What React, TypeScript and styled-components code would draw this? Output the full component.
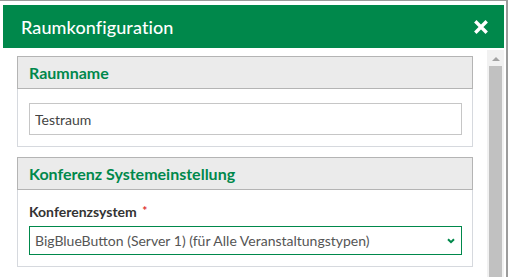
import styled, { createGlobalStyle } from 'styled-components';

const GlobalStyle = createGlobalStyle`
  html, body {
    margin: 0;
    padding: 0;
    overflow: hidden;
    background-color: #9c9c9c;
    font-family: Lato, 'Open Sans', sans-serif;
  }
`;

const green = '#00884b';

const CloseIcon = () => (
  <svg width='14' height='14' viewBox='0 0 14 14'>
    <path
      d='M2.5 2.5 L11.5 11.5 M11.5 2.5 L2.5 11.5'
      stroke='#fff'
      strokeWidth='3.4'
      strokeLinecap='square'
    />
  </svg>
);

const Chevron = () => (
  <svg width='8' height='6' viewBox='0 0 8 6'>
    <path d='M1 1.2 L4 4.2 L7 1.2' stroke={green} strokeWidth='2' fill='none' />
  </svg>
);

type PanelProps = {
  title?: string;
  children?: React.ReactNode;
};

const Panel = ({ title, children }: PanelProps): JSX.Element => {
  return (
    <PanelBox>
      <PanelHeader>{title}</PanelHeader>
      {children && <PanelBody>{children}</PanelBody>}
    </PanelBox>
  );
};

const App = (): JSX.Element => {
  return (
    <>
      <GlobalStyle />
      <Modal>
        <Header>
          <Title>Raumkonfiguration</Title>
          <CloseButton>
            <CloseIcon />
          </CloseButton>
        </Header>

        <BodyRow>
          <Content>
            <Panel title='Raumname'>
              <TextInput defaultValue='Testraum' />
            </Panel>

            <Panel title='Konferenz Systemeinstellung'>
              <Label>
                Konferenzsystem <Required>*</Required>
              </Label>
              <SelectBox>
                <span>BigBlueButton (Server 1) (für Alle Veranstaltungstypen)</span>
                <Chevron />
              </SelectBox>
            </Panel>

            {/* next panel, only its top edge is in view */}
            <Panel />
          </Content>

          <Scrollbar>
            <ArrowUp />
            <Thumb />
          </Scrollbar>
        </BodyRow>
      </Modal>
    </>
  );
};

const Modal = styled.div`
  width: 506px;
  height: 276px;
  overflow: hidden;
  margin-top: 1px;
  padding: 4px 2px 0 3px;
  box-sizing: border-box;
  background-color: #fff;
  display: flex;
  flex-direction: column;
`;

const Header = styled.header`
  height: 43px;
  flex-shrink: 0;
  display: flex;
  align-items: center;
  justify-content: space-between;
  padding: 0 16px 0 18px;
  background-color: ${green};
  color: #fff;
  margin-bottom: 2px;
`;

const Title = styled.h1`
  margin: 0;
  font-size: 18px;
  font-weight: 500;
  letter-spacing: 0.1px;
`;

const CloseButton = styled.div`
  display: flex;
  align-items: center;
  justify-content: center;
  width: 14px;
  height: 14px;
`;

const BodyRow = styled.div`
  flex: 1;
  display: flex;
  min-height: 0;
`;

const Content = styled.div`
  flex: 1;
  padding: 6px 14px 0 14px;
  display: flex;
  flex-direction: column;
  gap: 10px;
`;

const Scrollbar = styled.div`
  width: 17px;
  flex-shrink: 0;
  background-color: #f1f1f1;
  display: flex;
  flex-direction: column;
  align-items: center;
`;

const ArrowUp = styled.div`
  margin-top: 7px;
  width: 0;
  height: 0;
  border-left: 4px solid transparent;
  border-right: 4px solid transparent;
  border-bottom: 4px solid #a3a3a3;
`;

const Thumb = styled.div`
  margin-top: 5px;
  width: 13px;
  flex: 1;
  background-color: #c1c1c1;
`;

const PanelBox = styled.section`
  display: flex;
  flex-direction: column;
  flex-shrink: 0;
`;

const PanelHeader = styled.h2`
  margin: 0;
  height: 33px;
  box-sizing: border-box;
  display: flex;
  align-items: center;
  padding: 0 11px;
  background-color: #ebebeb;
  border: 1px solid #b4b4b4;
  color: ${green};
  font-size: 16px;
  font-weight: 700;
`;

const PanelBody = styled.div`
  padding: 14px 10px 11px 11px;
  border: 1px solid #d6d9de;
  border-top: none;
  display: flex;
  flex-direction: column;
`;

const TextInput = styled.input`
  height: 32px;
  box-sizing: border-box;
  padding: 0 5px;
  border: 1px solid #c6c6c6;
  font-family: Lato, sans-serif;
  font-size: 14px;
  color: #444;
  outline: none;
`;

const Label = styled.label`
  margin-top: -3px;
  margin-bottom: 4px;
  font-size: 14px;
  font-weight: 700;
  color: #333;
  line-height: 20px;
`;

const Required = styled.sup`
  margin-left: 2px;
  color: #e03030;
  font-size: 12px;
  vertical-align: 2px;
`;

const SelectBox = styled.div`
  height: 29px;
  box-sizing: border-box;
  display: flex;
  align-items: center;
  justify-content: space-between;
  padding: 0 6px 0 5px;
  border: 1px solid ${green};
  font-size: 14px;
  color: #555;
`;

export default App;
